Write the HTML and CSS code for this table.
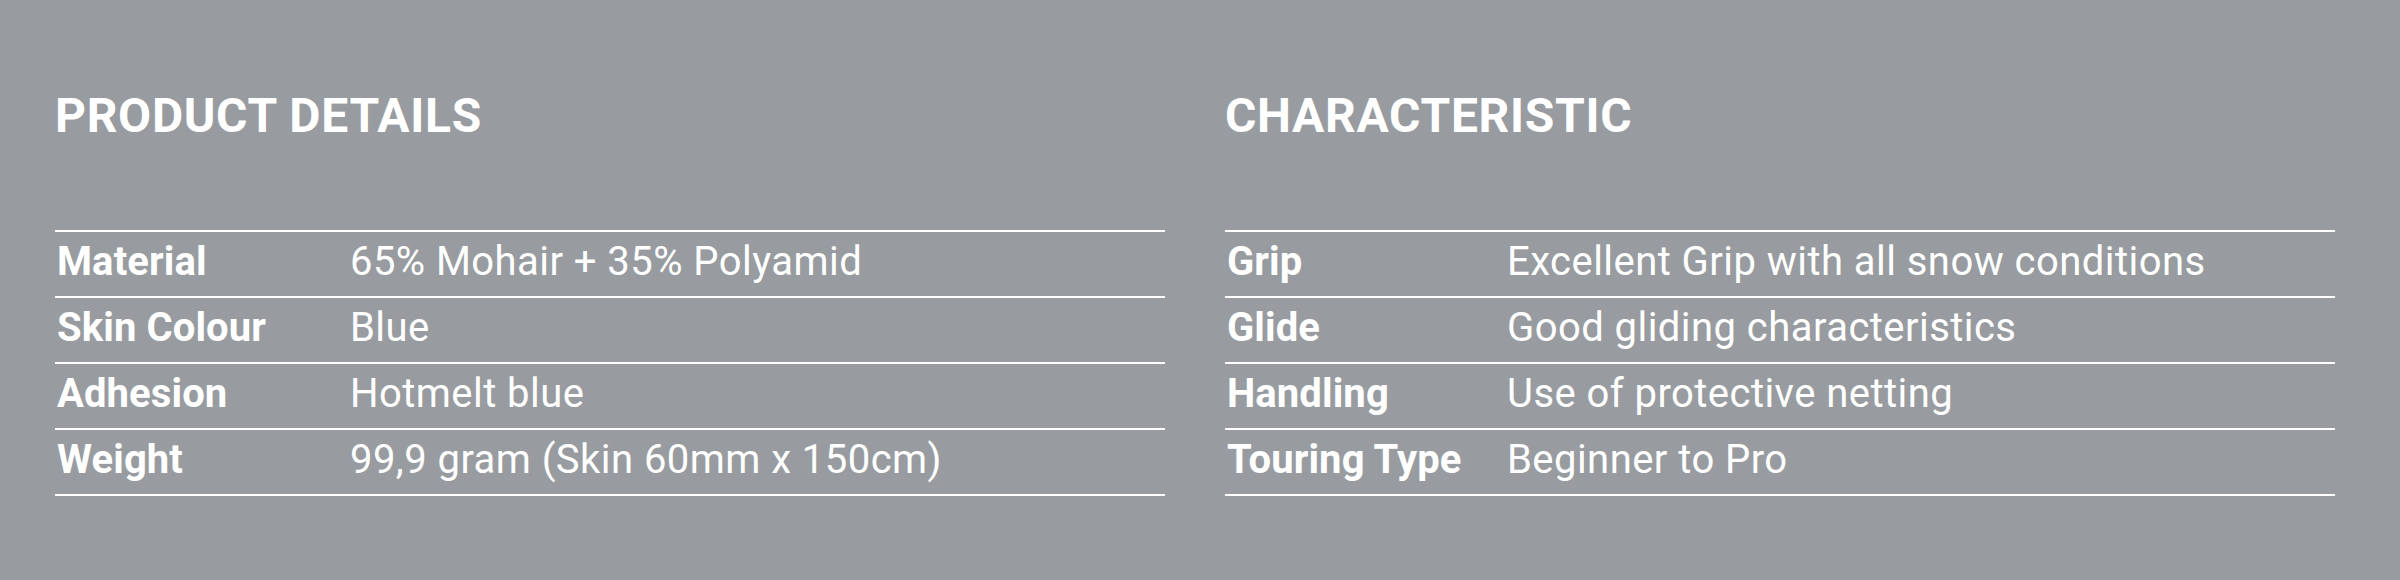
FILE: index.html
```html
<!DOCTYPE html>
<html lang="en">
<head>
<meta charset="utf-8">
<title>Product details</title>
<link rel="stylesheet" href="styles.css">
</head>
<body>
<section class="specs">
  <div class="spec-block">
    <h2 class="spec-title">PRODUCT DETAILS</h2>
    <dl class="spec-table spec-table--details">
      <div class="spec-row"><dt>Material</dt><dd>65% Mohair + 35% Polyamid</dd></div>
      <div class="spec-row"><dt>Skin Colour</dt><dd>Blue</dd></div>
      <div class="spec-row"><dt>Adhesion</dt><dd>Hotmelt blue</dd></div>
      <div class="spec-row"><dt>Weight</dt><dd>99,9 gram (Skin 60mm x 150cm)</dd></div>
    </dl>
  </div>
  <div class="spec-block">
    <h2 class="spec-title">CHARACTERISTIC</h2>
    <dl class="spec-table spec-table--chars">
      <div class="spec-row"><dt>Grip</dt><dd>Excellent Grip with all snow conditions</dd></div>
      <div class="spec-row"><dt>Glide</dt><dd>Good gliding characteristics</dd></div>
      <div class="spec-row"><dt>Handling</dt><dd>Use of protective netting</dd></div>
      <div class="spec-row"><dt>Touring Type</dt><dd>Beginner to Pro</dd></div>
    </dl>
  </div>
</section>
</body>
</html>
```
FILE: styles.css
```css
html, body {
  margin: 0;
  padding: 0;
}

body {
  background: #989ca1;
  color: #ffffff;
  font-family: Roboto, "Liberation Sans", Arial, sans-serif;
  width: 2400px;
  height: 580px;
  overflow: hidden;
}

.specs {
  display: grid;
  grid-template-columns: 1110px 1110px;
  column-gap: 60px;
  padding: 92px 0 0 55px;
}

.spec-title {
  margin: 0 0 90px;
  font-size: 48px;
  line-height: 48px;
  font-weight: 700;
  letter-spacing: 0.7px;
}

.spec-table {
  margin: 0;
  border-top: 2px solid #ffffff;
}

.spec-row {
  display: grid;
  border-bottom: 2px solid #ffffff;
  padding: 7px 0 11px;
}

.spec-table--details .spec-row {
  grid-template-columns: 293px 1fr;
}

.spec-table--chars .spec-row {
  grid-template-columns: 280px 1fr;
}

.spec-row dt,
.spec-row dd {
  margin: 0;
  padding-left: 2px;
  font-size: 40px;
  line-height: 46px;
  white-space: nowrap;
}

.spec-row dt {
  font-weight: 700;
  letter-spacing: 0.1px;
}

.spec-row dd {
  font-weight: 400;
  letter-spacing: 0.45px;
}
```
